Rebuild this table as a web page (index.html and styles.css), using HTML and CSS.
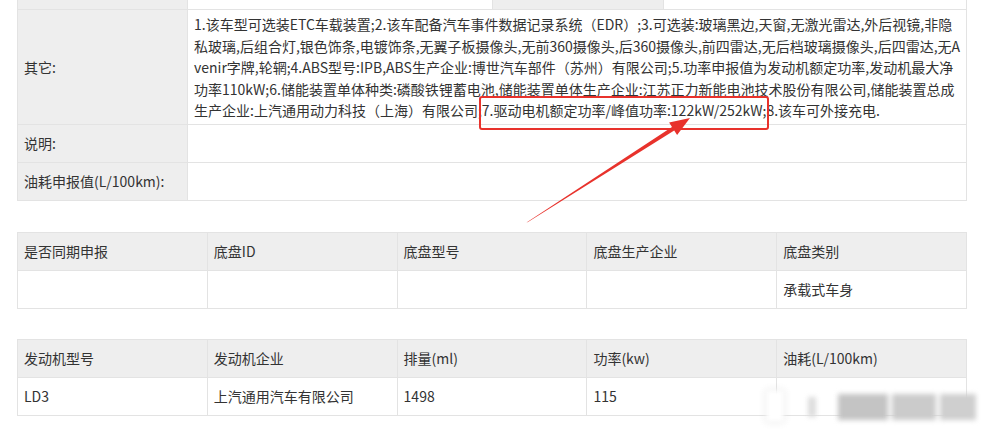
FILE: index.html
```html
<!DOCTYPE html>
<html lang="zh-CN">
<head>
  <meta charset="UTF-8" />
  <title>车型参数</title>
  <link rel="stylesheet" href="styles.css">
</head>
<body>
  <div class="page">
    <table class="info">
      <colgroup>
        <col class="c-label"><col class="c-value"><col class="c-label2"><col>
      </colgroup>
      <tr class="cut">
        <th></th><td></td><th></th><td></td>
      </tr>
      <tr class="tall">
        <th>其它:</th>
        <td colspan="3" class="notes">
          <span class="ln">1.该车型可选装ETC车载装置;2.该车配备汽车事件数据记录系统（EDR）;3.可选装:玻璃黑边,天窗,无激光雷达,外后视镜,非隐</span><br>
          <span class="ln">私玻璃,后组合灯,银色饰条,电镀饰条,无翼子板摄像头,无前360摄像头,后360摄像头,前四雷达,无后档玻璃摄像头,后四雷达,无A</span><br>
          <span class="ln">venir字牌,轮辋;4.ABS型号:IPB,ABS生产企业:博世汽车部件（苏州）有限公司;5.功率申报值为发动机额定功率,发动机最大净</span><br>
          <span class="ln">功率110kW;6.储能装置单体种类:磷酸铁锂蓄电池,储能装置单体生产企业:江苏正力新能电池技术股份有限公司,储能装置总成</span><br>
          <span class="ln">生产企业:上汽通用动力科技（上海）有限公司;<span class="mark">7.驱动电机额定功率/峰值功率:122kW/252kW;</span>8.该车可外接充电.</span>
        </td>
      </tr>
      <tr>
        <th>说明:</th>
        <td colspan="3"></td>
      </tr>
      <tr>
        <th>油耗申报值(L/100km):</th>
        <td colspan="3"></td>
      </tr>
    </table>

    <table class="grid">
      <tr class="head">
        <td>是否同期申报</td><td>底盘ID</td><td>底盘型号</td><td>底盘生产企业</td><td>底盘类别</td>
      </tr>
      <tr>
        <td></td><td></td><td></td><td></td><td>承载式车身</td>
      </tr>
    </table>

    <table class="grid">
      <tr class="head">
        <td>发动机型号</td><td>发动机企业</td><td>排量(ml)</td><td>功率(kw)</td><td>油耗(L/100km)</td>
      </tr>
      <tr>
        <td>LD3</td><td>上汽通用汽车有限公司</td><td>1498</td><td>115</td><td></td>
      </tr>
    </table>
  </div>

  <!-- annotation arrow drawn over the screenshot -->
  <svg class="arrow" width="984" height="433" viewBox="0 0 984 433">
    <polygon points="526.5,222.5 672,127 669.1,122.4 690,118 677.1,135 674.2,130.4 528,222" fill="#e8322c" />
  </svg>

  <div class="watermark">
    <span class="wm-a"></span>
    <span class="wm-b"></span>
    <span class="wm-c"></span>
    <span class="wm-d"></span>
    <span class="wm-e"></span>
  </div>
</body>
</html>
```

FILE: styles.css
```css
body {
  margin: 0;
  background: #fff;
  font-family: "Noto Sans CJK SC", "Liberation Sans", sans-serif;
  font-size: 14px;
  color: #333;
  position: relative;
  width: 984px;
  height: 433px;
  overflow: hidden;
}
.page {
  margin-left: 17px;
  width: 950px;
}
table {
  width: 950px;
  border-collapse: collapse;
  table-layout: fixed;
}
th, td {
  border: 1px solid #e3e3e3;
  height: 38px;
  padding: 0 6px;
  text-align: left;
  font-weight: normal;
  vertical-align: middle;
  box-sizing: border-box;
}
.info {
  margin-top: -29px;
}
.info th {
  background: #eee;
}
.c-label { width: 170px; }
.c-value { width: 305px; }
.c-label2 { width: 171px; }
.notes {
  padding: 4px 6px 2px;
  line-height: 21.6px;
}
.ln {
  white-space: nowrap;
}
.mark {
  position: relative;
}
.mark::after {
  content: "";
  position: absolute;
  left: -3px;
  right: -3px;
  top: -4px;
  bottom: -10px;
  border: 2px solid #e8322c;
  border-radius: 3px;
}
.grid {
  margin-top: 31px;
}
.grid + .grid {
  margin-top: 30px;
}
.grid .head td {
  background: #eee;
}
.arrow {
  position: absolute;
  left: 0;
  top: 0;
  pointer-events: none;
}
.watermark {
  position: absolute;
  left: 762px;
  top: 388px;
  width: 216px;
  height: 36px;
  filter: blur(2.5px);
}
.watermark span {
  position: absolute;
  display: block;
}
.wm-a {
  left: 4px; top: 2px; width: 18px; height: 32px;
  background: #fff;
  box-shadow: 0 0 4px rgba(0, 0, 0, 0.2);
}
.wm-b {
  left: 46px; top: 9px; width: 8px; height: 20px;
  background: #dcdcdc;
}
.wm-c {
  left: 76px; top: 6px; width: 50px; height: 26px;
  background: #c4c4c4;
}
.wm-d {
  left: 130px; top: 6px; width: 44px; height: 26px;
  background: #cbcbcb;
}
.wm-e {
  left: 178px; top: 6px; width: 36px; height: 26px;
  background: #cfcfcf;
}
```
